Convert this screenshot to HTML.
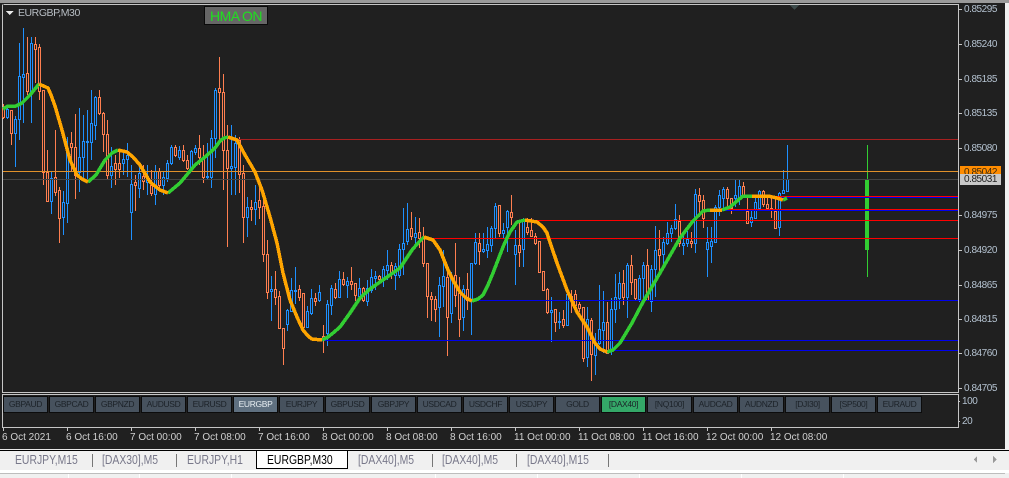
<!DOCTYPE html>
<html><head><meta charset="utf-8">
<style>
html,body{margin:0;padding:0;width:1009px;height:478px;overflow:hidden;background:#f0f0f0;font-family:"Liberation Sans",sans-serif}
#p{position:absolute;left:0;top:0;width:1005px;height:449px;background:#202020}
#top{position:absolute;left:0;top:0;width:1009px;height:3px;background:#9a9a9a}
svg{position:absolute;left:0;top:0}
.y,.d,.b,.t,.s{position:absolute;white-space:nowrap}
.y{left:964px;font-size:10px;line-height:12px;letter-spacing:-.45px;color:#b4c2d0}
.d{top:431px;font-size:10px;line-height:13px;color:#d0d0d0}
.b{top:396px;width:43px;height:15px;border:1px solid #0c0c0c;background:#47525e;color:#1c2228;font-size:8.5px;line-height:15px;text-align:center;letter-spacing:-.35px}
.t{top:452px;font-size:13px;line-height:15px;color:#78788a;transform:scaleX(.8);transform-origin:0 0}
.s{top:454px;width:1px;height:13px;background:#777}
</style></head><body>
<div id="p"></div><div id="top"></div>
<svg width="1009" height="478" viewBox="0 0 1009 478" fill="none" shape-rendering="crispEdges">
<path d="M3.5 4.5H958.5V392.5H2.5V4.5M2.5 394.5H958.5V427.5H2.5z" stroke="#c6c6c6"/>
<path d="M958 9.5h4M958 44.5h4M958 79.5h4M958 113.5h4M958 148.5h4M958 215.5h4M958 250.5h4M958 285.5h4M958 319.5h4M958 353.5h4M958 388.5h4M958 401.5h2M958 421.5h2M3.5 428v3M67.5 428v3M131.5 428v3M195.5 428v3M259.5 428v3M323.5 428v3M387.5 428v3M451.5 428v3M515.5 428v3M579.5 428v3M643.5 428v3M707.5 428v3M771.5 428v3" stroke="#c6c6c6"/>
<polygon points="790,5 799,5 794.5,10" fill="#3d4b4b"/>
<polygon points="6,11 13.5,11 9.7,15" fill="#e8e8e8"/>
<path stroke="#ff7f50" d="M3.5 104V119M11.5 110V145M27.5 37V95M35.5 37V83M39.5 44V100M43.5 90V185M47.5 150V202M55.5 130V196M59.5 187V243M71.5 132V172M75.5 114V199M99.5 90V115M103.5 112V152M107.5 120V180M115.5 155V185M119.5 150V178M135.5 175V211M143.5 165V190M151.5 170V196M159.5 168V190M175.5 145V157M183.5 145V162M187.5 155V170M199.5 135V165M203.5 145V183M219.5 57V140M223.5 74V190M227.5 125V247M239.5 137V193M243.5 165V243M251.5 200V221M259.5 188V219M263.5 190V262M267.5 240V299M275.5 271V305M279.5 291V328M283.5 328V365M299.5 285V301M303.5 293V327M315.5 293V306M323.5 325V353M335.5 283V299M343.5 272V286M351.5 267V290M355.5 283V301M363.5 287V302M379.5 275V282M391.5 262V279M411.5 212V240M419.5 218V248M423.5 227V267M427.5 263V318M431.5 292V321M435.5 296V322M447.5 272V356M455.5 243V307M459.5 277V337M467.5 273V310M479.5 233V265M499.5 205V237M511.5 195V225M519.5 222V267M527.5 218V235M531.5 218V237M535.5 233V245M539.5 241V273M543.5 271V291M547.5 288V314M555.5 309V332M563.5 310V328M571.5 290V313M575.5 290V310M579.5 302V312M583.5 307V362M591.5 318V381M607.5 302V353M623.5 270V305M631.5 255V295M635.5 279V301M647.5 249V301M659.5 230V277M679.5 215V247M691.5 232V248M699.5 188V217M703.5 195V228M727.5 187V209M731.5 198V214M743.5 182V197M747.5 198V224M763.5 190V207M767.5 195V209M771.5 195V218M775.5 198V229"/>
<path stroke="#1e90ff" d="M7.5 107V119M15.5 116V167M19.5 43V140M23.5 28V123M31.5 37V123M51.5 172V214M63.5 191V235M67.5 137V223M79.5 108V192M83.5 115V180M87.5 110V182M91.5 90V160M95.5 96V140M111.5 147V188M123.5 150V175M127.5 143V177M131.5 165V240M139.5 165V198M147.5 165V195M155.5 165V205M163.5 172V195M167.5 160V182M171.5 145V165M179.5 146V160M191.5 150V170M195.5 145V155M207.5 143V180M211.5 130V188M215.5 88V158M231.5 125V195M235.5 135V195M247.5 197V237M255.5 185V225M271.5 276V321M287.5 309V331M291.5 278V312M295.5 267V304M307.5 306V328M311.5 289V315M319.5 285V302M327.5 300V346M331.5 285V315M339.5 271V297M347.5 277V298M359.5 278V301M367.5 280V306M371.5 269V293M375.5 271V290M383.5 266V287M387.5 250V280M395.5 263V290M399.5 244V278M403.5 208V275M407.5 203V245M415.5 217V247M439.5 277V337M443.5 250V307M451.5 272V323M463.5 285V331M471.5 263V335M475.5 233V265M483.5 233V253M487.5 227V258M491.5 226V252M495.5 203V238M503.5 223V238M507.5 210V252M515.5 230V285M523.5 218V267M551.5 297V342M559.5 312V329M567.5 294V326M587.5 307V367M595.5 333V375M599.5 285V345M603.5 291V353M611.5 298V355M615.5 274V323M619.5 272V309M627.5 263V318M639.5 275V302M643.5 262V302M651.5 265V312M655.5 226V297M663.5 237V267M667.5 222V245M671.5 225V242M675.5 204V230M683.5 232V255M687.5 231V247M695.5 189V253M707.5 227V277M711.5 227V263M715.5 205V242M719.5 190V216M723.5 187V208M735.5 180V207M739.5 180V205M751.5 210V227M755.5 197V218M759.5 190V209M779.5 192V236M783.5 170V193M787.5 145V191"/>
<path stroke="#ff7f50" fill="#202020" d="M2.5 108.5h2V117.5h-2zM10.5 110.5h2V133.5h-2zM26.5 73.5h2V91.5h-2zM34.5 44.5h2V49.5h-2zM38.5 47.5h2V91.5h-2zM42.5 90.5h2V172.5h-2zM46.5 172.5h2V201.5h-2zM54.5 177.5h2V192.5h-2zM58.5 190.5h2V218.5h-2zM70.5 143.5h2V147.5h-2zM74.5 147.5h2V175.5h-2zM98.5 97.5h2V113.5h-2zM102.5 113.5h2V134.5h-2zM106.5 134.5h2V175.5h-2zM114.5 163.5h2V169.5h-2zM118.5 163.5h2V169.5h-2zM134.5 182.5h2V185.5h-2zM142.5 176.5h2V181.5h-2zM150.5 185.5h2V193.5h-2zM158.5 171.5h2V185.5h-2zM174.5 147.5h2V155.5h-2zM182.5 150.5h2V160.5h-2zM186.5 160.5h2V168.5h-2zM198.5 148.5h2V157.5h-2zM202.5 157.5h2V177.5h-2zM218.5 88.5h2V92.5h-2zM222.5 92.5h2V150.5h-2zM226.5 150.5h2V168.5h-2zM238.5 140.5h2V174.5h-2zM242.5 173.5h2V217.5h-2zM250.5 207.5h2V209.5h-2zM258.5 200.5h2V207.5h-2zM262.5 206.5h2V254.5h-2zM266.5 254.5h2V292.5h-2zM274.5 289.5h2V297.5h-2zM278.5 296.5h2V328.5h-2zM282.5 328.5h2V348.5h-2zM298.5 289.5h2V297.5h-2zM302.5 293.5h2V327.5h-2zM314.5 298.5h2V301.5h-2zM322.5 336.5h2V338.5h-2zM334.5 289.5h2V297.5h-2zM342.5 279.5h2V284.5h-2zM350.5 281.5h2V284.5h-2zM354.5 283.5h2V295.5h-2zM362.5 288.5h2V300.5h-2zM378.5 276.5h2V279.5h-2zM390.5 265.5h2V274.5h-2zM410.5 228.5h2V236.5h-2zM418.5 232.5h2V238.5h-2zM422.5 237.5h2V263.5h-2zM426.5 263.5h2V296.5h-2zM430.5 296.5h2V299.5h-2zM434.5 299.5h2V309.5h-2zM446.5 277.5h2V317.5h-2zM454.5 275.5h2V295.5h-2zM458.5 293.5h2V319.5h-2zM466.5 289.5h2V300.5h-2zM478.5 243.5h2V251.5h-2zM498.5 205.5h2V233.5h-2zM510.5 212.5h2V217.5h-2zM518.5 245.5h2V252.5h-2zM526.5 227.5h2V232.5h-2zM530.5 230.5h2V236.5h-2zM534.5 236.5h2V243.5h-2zM538.5 241.5h2V272.5h-2zM542.5 271.5h2V290.5h-2zM546.5 289.5h2V312.5h-2zM554.5 309.5h2V322.5h-2zM562.5 319.5h2V325.5h-2zM570.5 296.5h2V300.5h-2zM574.5 294.5h2V305.5h-2zM578.5 304.5h2V308.5h-2zM582.5 307.5h2V358.5h-2zM590.5 320.5h2V354.5h-2zM606.5 322.5h2V353.5h-2zM622.5 283.5h2V297.5h-2zM630.5 265.5h2V282.5h-2zM634.5 279.5h2V298.5h-2zM646.5 265.5h2V300.5h-2zM658.5 249.5h2V255.5h-2zM678.5 221.5h2V243.5h-2zM690.5 241.5h2V243.5h-2zM698.5 195.5h2V201.5h-2zM702.5 200.5h2V218.5h-2zM726.5 189.5h2V198.5h-2zM730.5 198.5h2V208.5h-2zM742.5 186.5h2V197.5h-2zM746.5 211.5h2V223.5h-2zM762.5 191.5h2V204.5h-2zM766.5 204.5h2V208.5h-2zM770.5 208.5h2V209.5h-2zM774.5 211.5h2V228.5h-2z"/>
<path stroke="#1e90ff" fill="#202020" d="M6.5 109.5h2V117.5h-2zM14.5 119.5h2V133.5h-2zM18.5 76.5h2V119.5h-2zM22.5 74.5h2V77.5h-2zM30.5 43.5h2V91.5h-2zM50.5 178.5h2V201.5h-2zM62.5 202.5h2V217.5h-2zM66.5 148.5h2V203.5h-2zM78.5 157.5h2V172.5h-2zM82.5 141.5h2V157.5h-2zM86.5 141.5h2V142.5h-2zM90.5 123.5h2V142.5h-2zM94.5 97.5h2V125.5h-2zM110.5 166.5h2V175.5h-2zM122.5 159.5h2V163.5h-2zM126.5 155.5h2V159.5h-2zM130.5 184.5h2V212.5h-2zM138.5 173.5h2V188.5h-2zM146.5 176.5h2V182.5h-2zM154.5 171.5h2V194.5h-2zM162.5 177.5h2V185.5h-2zM166.5 163.5h2V178.5h-2zM170.5 147.5h2V163.5h-2zM178.5 150.5h2V157.5h-2zM190.5 151.5h2V167.5h-2zM194.5 148.5h2V152.5h-2zM206.5 176.5h2V177.5h-2zM210.5 138.5h2V177.5h-2zM214.5 90.5h2V138.5h-2zM230.5 166.5h2V168.5h-2zM234.5 143.5h2V167.5h-2zM246.5 207.5h2V217.5h-2zM254.5 202.5h2V209.5h-2zM270.5 289.5h2V291.5h-2zM286.5 310.5h2V324.5h-2zM290.5 290.5h2V311.5h-2zM294.5 290.5h2V291.5h-2zM306.5 311.5h2V327.5h-2zM310.5 298.5h2V313.5h-2zM318.5 292.5h2V300.5h-2zM326.5 304.5h2V333.5h-2zM330.5 288.5h2V305.5h-2zM338.5 279.5h2V297.5h-2zM346.5 281.5h2V285.5h-2zM358.5 288.5h2V296.5h-2zM366.5 288.5h2V301.5h-2zM370.5 277.5h2V290.5h-2zM374.5 276.5h2V278.5h-2zM382.5 269.5h2V278.5h-2zM386.5 265.5h2V270.5h-2zM394.5 266.5h2V275.5h-2zM398.5 249.5h2V275.5h-2zM402.5 243.5h2V249.5h-2zM406.5 229.5h2V241.5h-2zM414.5 233.5h2V237.5h-2zM438.5 285.5h2V307.5h-2zM442.5 276.5h2V286.5h-2zM450.5 277.5h2V313.5h-2zM462.5 289.5h2V317.5h-2zM470.5 263.5h2V301.5h-2zM474.5 242.5h2V263.5h-2zM482.5 249.5h2V251.5h-2zM486.5 244.5h2V250.5h-2zM490.5 228.5h2V245.5h-2zM494.5 206.5h2V228.5h-2zM502.5 230.5h2V233.5h-2zM506.5 211.5h2V227.5h-2zM514.5 245.5h2V254.5h-2zM522.5 220.5h2V249.5h-2zM550.5 310.5h2V312.5h-2zM558.5 321.5h2V322.5h-2zM566.5 294.5h2V325.5h-2zM586.5 319.5h2V357.5h-2zM594.5 343.5h2V355.5h-2zM598.5 329.5h2V343.5h-2zM602.5 322.5h2V330.5h-2zM610.5 309.5h2V350.5h-2zM614.5 297.5h2V309.5h-2zM618.5 283.5h2V298.5h-2zM626.5 265.5h2V297.5h-2zM638.5 278.5h2V299.5h-2zM642.5 265.5h2V278.5h-2zM650.5 269.5h2V301.5h-2zM654.5 250.5h2V269.5h-2zM662.5 242.5h2V254.5h-2zM666.5 233.5h2V243.5h-2zM670.5 228.5h2V233.5h-2zM674.5 219.5h2V228.5h-2zM682.5 243.5h2V245.5h-2zM686.5 239.5h2V243.5h-2zM694.5 194.5h2V243.5h-2zM706.5 242.5h2V249.5h-2zM710.5 241.5h2V246.5h-2zM714.5 207.5h2V242.5h-2zM718.5 195.5h2V207.5h-2zM722.5 189.5h2V198.5h-2zM734.5 195.5h2V198.5h-2zM738.5 186.5h2V197.5h-2zM750.5 217.5h2V222.5h-2zM754.5 202.5h2V218.5h-2zM758.5 191.5h2V208.5h-2zM778.5 193.5h2V227.5h-2zM782.5 190.5h2V193.5h-2zM786.5 179.5h2V191.5h-2z"/>
<path d="M867.5 145V277" stroke="#32cd32"/>
<rect x="865" y="179" width="4" height="71" fill="#32cd32"/>
<path d="M3 171.5H958" stroke="#e0902a"/>
<path d="M3 179.5H958" stroke="#444"/>
<path d="M235 139.5H958" stroke="#a82020"/>
<path d="M525 220.5H958M424 238.5H958M752 196.5H958M710 209.5H958" stroke="#ff0000"/>
<path d="M752 197.5H958M710 210.5H958M472 300.5H958M322 340.5H958M607 350.5H958" stroke="#0000ee"/>
<g stroke-width="3.5" stroke-linejoin="round">
<path stroke="#32cd32" d="M3 109L8 106 16 106 22 103 30 95 39 84M88 182L96 175 105 160 112 153 118 150M168 193L180 183 195 165 205 157 215 148 220 141 224 138 228 137M322 340L328 337 333 333 340 327 350 313 360 298 370 289 380 282 390 275 400 268 406 259 412 250 418 243 424 237M472 301L478 299 483 295 488 285 493 273 498 260 503 247 507 238 510 232 517 222 525 220M607 352L613 350 620 343 626 333 632 323 643 302 660 273 680 238 693 221 703 211 710 210M722 210L730 207 743 196 752 196M783 200L787 198"/>
<path stroke="#ffa500" d="M39 84L48 88 51 95 55 106 62 130 70 160 77 175 82 179 88 182M118 150L127 152 133 157 140 165 150 182 160 190 168 193M228 137L237 140 245 155 255 172 262 190 270 217 277 243 283 273 290 300 297 317 303 330 308 336 312 339 322 340M424 237L433 240 440 250 448 270 454 282 460 292 466 298 472 301M525 220L537 222 543 227 547 233 557 263 567 290 577 312 587 327 595 343 600 349 607 352M710 210L722 210M752 196L768 196 777 198 783 200"/>
</g>
<path d="M0 449.5H1005" stroke="#e8e8e8"/>
<path d="M0 450.5H1009" stroke="#000"/>
<rect x="0" y="470" width="1009" height="3" fill="#fff"/>
<rect x="0" y="473" width="1005" height="1" fill="#bdbdbd"/>
<path d="M68.5 474v4M139.5 474v4M231.5 474v4M435.5 474v4M537.5 474v4M639.5 474v4M741.5 474v4M843.5 474v4" stroke="#fff"/>
<path d="M256.5 451V468.5H347.5V451" stroke="#000" fill="#fff"/>
<polygon points="977,456 977,463 973.5,459.5" fill="#999"/>
<polygon points="993,456 993,463 996.5,459.5" fill="#999"/>
</svg>
<div style="position:absolute;left:204px;top:6px;width:62px;height:17px;background:#666;border:1px solid #0a0a0a;color:#1fe01f;font-size:14px;line-height:18px;text-align:center;letter-spacing:-.55px">HMA ON</div>
<div style="position:absolute;left:18px;top:7px;font-size:10.5px;line-height:12px;letter-spacing:-.45px;color:#b8bec4;white-space:nowrap">EURGBP,M30</div>
<div class="y" style="top:4px">0.85295</div>
<div class="y" style="top:39px">0.85240</div>
<div class="y" style="top:74px">0.85185</div>
<div class="y" style="top:108px">0.85135</div>
<div class="y" style="top:143px">0.85080</div>
<div class="y" style="top:210px">0.84975</div>
<div class="y" style="top:245px">0.84920</div>
<div class="y" style="top:280px">0.84865</div>
<div class="y" style="top:314px">0.84815</div>
<div class="y" style="top:348px">0.84760</div>
<div class="y" style="top:383px">0.84705</div>
<div class="y" style="left:960px;top:166px;width:37px;height:9px;padding-left:4px;background:#ff8c00;color:#3a2a10;overflow:hidden;line-height:13px">0.85042</div>
<div class="y" style="left:960px;top:174px;width:37px;height:11px;padding-left:4px;background:#c8c8c8;color:#222;line-height:12px">0.85031</div>
<div class="y" style="left:962px;top:396px">100</div>
<div class="y" style="left:962px;top:416px">20</div>
<div class="b" style="left:3px">GBPAUD</div>
<div class="b" style="left:49px">GBPCAD</div>
<div class="b" style="left:95px">GBPNZD</div>
<div class="b" style="left:141px">AUDUSD</div>
<div class="b" style="left:187px">EURUSD</div>
<div class="b" style="left:233px;background:#5f7080;color:#e8eef2">EURGBP</div>
<div class="b" style="left:279px">EURJPY</div>
<div class="b" style="left:325px">GBPUSD</div>
<div class="b" style="left:371px">GBPJPY</div>
<div class="b" style="left:417px">USDCAD</div>
<div class="b" style="left:463px">USDCHF</div>
<div class="b" style="left:509px">USDJPY</div>
<div class="b" style="left:555px">GOLD</div>
<div class="b" style="left:601px;background:#34a868">[DAX40]</div>
<div class="b" style="left:647px">[NQ100]</div>
<div class="b" style="left:693px">AUDCAD</div>
<div class="b" style="left:739px">AUDNZD</div>
<div class="b" style="left:785px">[DJI30]</div>
<div class="b" style="left:831px">[SP500]</div>
<div class="b" style="left:877px">EURAUD</div>
<div class="d" style="left:2px">6 Oct 2021</div>
<div class="d" style="left:66px">6 Oct 16:00</div>
<div class="d" style="left:130px">7 Oct 00:00</div>
<div class="d" style="left:194px">7 Oct 08:00</div>
<div class="d" style="left:258px">7 Oct 16:00</div>
<div class="d" style="left:322px">8 Oct 00:00</div>
<div class="d" style="left:386px">8 Oct 08:00</div>
<div class="d" style="left:450px">8 Oct 16:00</div>
<div class="d" style="left:514px">11 Oct 00:00</div>
<div class="d" style="left:578px">11 Oct 08:00</div>
<div class="d" style="left:642px">11 Oct 16:00</div>
<div class="d" style="left:706px">12 Oct 00:00</div>
<div class="d" style="left:770px">12 Oct 08:00</div>
<div class="t" style="left:15px">EURJPY,M15</div>
<div class="s" style="left:92px"></div>
<div class="t" style="left:102px">[DAX30],M5</div>
<div class="s" style="left:176px"></div>
<div class="t" style="left:187px">EURJPY,H1</div>
<div class="t" style="left:267px;color:#000">EURGBP,M30</div>
<div class="t" style="left:358px">[DAX40],M5</div>
<div class="s" style="left:432px"></div>
<div class="t" style="left:442px">[DAX40],M5</div>
<div class="s" style="left:516px"></div>
<div class="t" style="left:527px">[DAX40],M15</div>
<div class="s" style="left:608px"></div>
</body></html>
